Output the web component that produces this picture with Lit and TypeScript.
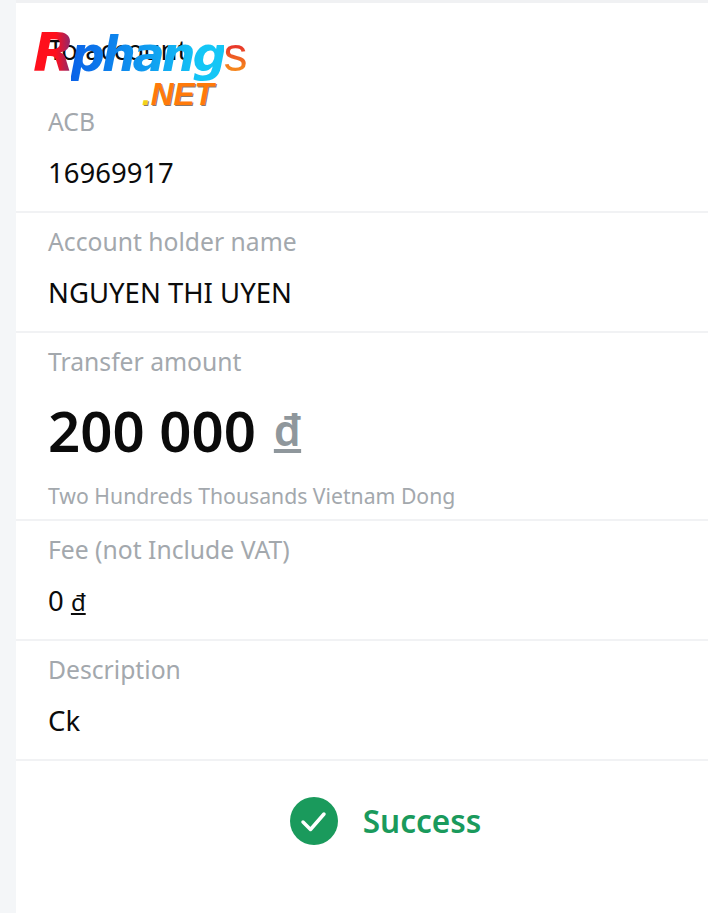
import { LitElement, html, css } from "lit";
import { customElement } from "lit/decorators.js";

@customElement("app-root")
export class AppRoot extends LitElement {
  static styles = css`
    :host {
      display: block;
      width: 708px;
      height: 913px;
      overflow: hidden;
      background: #f4f6f8;
      font-family: "Noto Sans", "Open Sans", sans-serif;
      color: #0b0b0b;
    }
    .sheet {
      position: relative;
      margin-left: 16px;
      height: 913px;
      background: #fff;
      border-top: 3px solid #f0f1f3;
      box-sizing: border-box;
    }
    .row {
      box-sizing: border-box;
      padding: 0 0 0 32px;
      border-bottom: 2px solid #f1f2f4;
      height: 120px;
    }
    .row.first {
      height: 210px;
      padding-top: 32px;
    }
    .row.big {
      height: 188px;
    }
    .title {
      font-size: 27.5px;
      line-height: 30px;
      height: 72px;
    }
    .label {
      font-size: 24.7px;
      line-height: 30px;
      padding-top: 14px;
      color: #a3a8ad;
    }
    .first .label {
      padding-top: 0;
    }
    .value {
      font-size: 27.5px;
      line-height: 30px;
      margin-top: 21px;
    }
    .value u {
      font-size: 24px;
    }
    .amount {
      font-size: 56.3px;
      font-weight: 600;
      line-height: 60px;
      margin-top: 23px;
      display: flex;
      align-items: center;
      gap: 18px;
    }
    .amount u {
      font-size: 43px;
      color: #8f979c;
      font-weight: 600;
    }
    .words {
      font-size: 21.2px;
      line-height: 28px;
      color: #a3a8ad;
      margin-top: 22px;
    }
    .status {
      display: flex;
      align-items: center;
      justify-content: center;
      gap: 25px;
      padding: 36px 0 0 47px;
      font-size: 31.5px;
      font-weight: 600;
      color: #1a9a5c;
    }
    .status svg {
      width: 48px;
      height: 48px;
    }
    .status span {
      line-height: 46px;
    }
    .logo {
      position: absolute;
      left: 17px;
      top: 21px;
      width: 220px;
      font-family: "DejaVu Sans", sans-serif;
      font-weight: 700;
      font-style: italic;
    }
    .brand {
      font-size: 48px;
      letter-spacing: -3.3px;
      white-space: nowrap;
      height: 55px;
      line-height: 58px;
    }
    .brand .r {
      font-size: 54px;
      letter-spacing: -4px;
      background: linear-gradient(90deg, #ff0f1c 60%, #8a2a70);
      -webkit-background-clip: text;
      background-clip: text;
      color: transparent;
    }
    .brand .mid {
      background: linear-gradient(90deg, #0a62e8, #14c6f6 85%);
      -webkit-background-clip: text;
      background-clip: text;
      color: transparent;
    }
    .brand .s {
      font-family: "Liberation Sans", sans-serif;
      font-style: normal;
      font-weight: 400;
      letter-spacing: 0;
      background: linear-gradient(180deg, #e8382a 35%, #f5841c 75%);
      -webkit-background-clip: text;
      background-clip: text;
      color: transparent;
    }
    .net {
      margin-left: 109px;
      font-family: "Liberation Sans", sans-serif;
      font-size: 31.5px;
      line-height: 30px;
      color: #ff7a0a;
      text-shadow: 1px 1px 0 rgba(60, 30, 10, 0.6);
    }
    .net i {
      color: #f2d21a;
    }
  `;

  render() {
    return html`
      <div class="sheet">
        <div class="row first">
          <div class="title">To account</div>
          <div class="label">ACB</div>
          <div class="value">16969917</div>
        </div>
        <div class="row">
          <div class="label">Account holder name</div>
          <div class="value">NGUYEN THI UYEN</div>
        </div>
        <div class="row big">
          <div class="label">Transfer amount</div>
          <div class="amount">200 000 <u>đ</u></div>
          <div class="words">Two Hundreds Thousands Vietnam Dong</div>
        </div>
        <div class="row">
          <div class="label">Fee (not Include VAT)</div>
          <div class="value">0 <u>đ</u></div>
        </div>
        <div class="row">
          <div class="label">Description</div>
          <div class="value">Ck</div>
        </div>
        <div class="status">
          <svg viewBox="0 0 48 48">
            <circle cx="24" cy="24" r="24" fill="#1a9a5c"></circle>
            <path d="M13 25l7.5 7.5L34 17" fill="none" stroke="#fff" stroke-width="3.5" stroke-linecap="round" stroke-linejoin="round"></path>
          </svg>
          <span>Success</span>
        </div>
        <div class="logo">
          <div class="brand"><span class="r">R</span><span class="mid">phang</span><span class="s">s</span></div>
          <div class="net"><i>.</i>NET</div>
        </div>
      </div>
    `;
  }
}
